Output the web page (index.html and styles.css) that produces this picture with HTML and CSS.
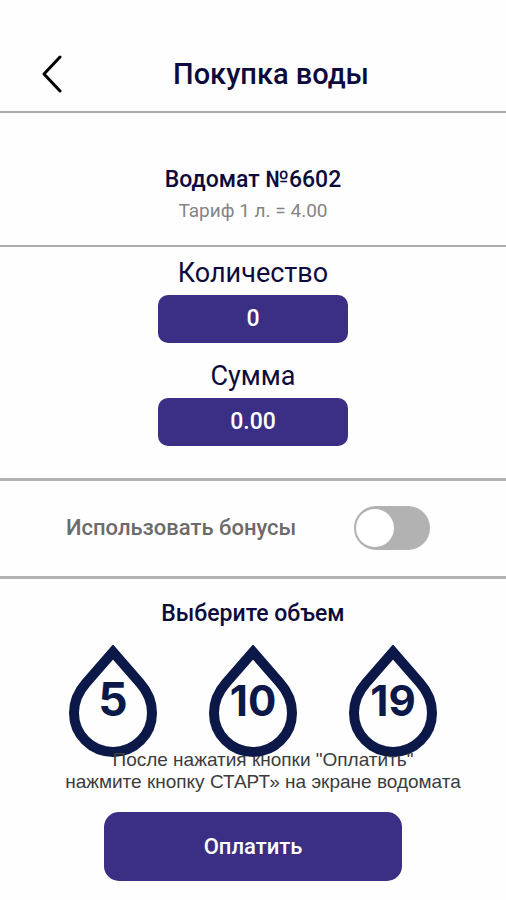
FILE: index.html
```html
<!DOCTYPE html>
<html lang="ru">
<head>
<meta charset="utf-8">
<meta name="viewport" content="width=device-width, initial-scale=1">
<title>Покупка воды</title>
<link rel="stylesheet" href="styles.css">
</head>
<body>
<header class="header">
  <button class="back" type="button" aria-label="Назад">
    <svg width="20" height="38" viewBox="0 0 20 38" fill="none" stroke="#000" stroke-width="3" stroke-linecap="round" stroke-linejoin="round"><path d="M18 2 2 19 18 36"/></svg>
  </button>
  <h1 class="title">Покупка воды</h1>
</header>
<main>
  <section class="machine">
    <h2 class="subtitle">Водомат №6602</h2>
    <p class="tariff">Тариф 1 л. = 4.00</p>
  </section>
  <section class="totals">
    <label class="total-label" for="amount">Количество</label>
    <input class="total-value" id="amount" type="text" value="0" readonly>
    <label class="total-label" for="sum">Сумма</label>
    <input class="total-value" id="sum" type="text" value="0.00" readonly>
  </section>
  <section class="bonus">
    <label class="bonus-label" for="bonus">Использовать бонусы</label>
    <input class="switch" id="bonus" type="checkbox" role="switch">
  </section>
  <section class="volume">
    <h2 class="subtitle">Выберите объем</h2>
    <div class="drops">
      <button class="drop" type="button">
        <svg class="drop-shape" viewBox="0 0 88 114"><path d="M44 7 L17 38 C9 47 5 56 5 68 A39 39 0 0 0 83 68 C83 56 79 47 71 38Z"/></svg>
        <span class="drop-number drop-number-single">5</span>
      </button>
      <button class="drop" type="button">
        <svg class="drop-shape" viewBox="0 0 88 114"><path d="M44 7 L17 38 C9 47 5 56 5 68 A39 39 0 0 0 83 68 C83 56 79 47 71 38Z"/></svg>
        <span class="drop-number">10</span>
      </button>
      <button class="drop" type="button">
        <svg class="drop-shape" viewBox="0 0 88 114"><path d="M44 7 L17 38 C9 47 5 56 5 68 A39 39 0 0 0 83 68 C83 56 79 47 71 38Z"/></svg>
        <span class="drop-number">19</span>
      </button>
    </div>
    <p class="hint">После нажатия кнопки "Оплатить"<br>нажмите кнопку СТАРТ» на экране водомата</p>
    <button class="pay" type="button">Оплатить</button>
  </section>
</main>
</body>
</html>
```
FILE: styles.css
```css
* {
  box-sizing: border-box;
}

body {
  margin: 0;
  background: #fefefe;
  color: #0c0b3c;
  font-family: Roboto, "Liberation Sans", sans-serif;
}

h1, h2, p {
  margin: 0;
}

button {
  padding: 0;
  border: 0;
  background: none;
  color: inherit;
  font: inherit;
  cursor: pointer;
}

.header {
  display: grid;
  grid-template-columns: 40px 1fr 40px;
  align-items: center;
  padding: 48px 32px 11px;
  border-bottom: 2px solid #acacac;
}

.back {
  display: grid;
  place-items: center;
  height: 52px;
}

.title {
  padding-left: 36px;
  font-size: 29px;
  line-height: 36px;
  font-weight: 500;
  text-align: center;
}

.subtitle {
  font-size: 23px;
  line-height: 32px;
  font-weight: 500;
}

.machine {
  padding: 51px 16px 19px;
  border-bottom: 2px solid #acacac;
  text-align: center;
}

.tariff {
  color: #858585;
  font-size: 19px;
  line-height: 30px;
}

.totals {
  display: flex;
  flex-direction: column;
  align-items: center;
  padding: 4px 16px 32px;
  border-bottom: 3px solid #b2b2b2;
}

.total-label {
  font-size: 27px;
  line-height: 44px;
}

.total-value {
  width: 190px;
  height: 48px;
  margin-bottom: 11px;
  padding: 0;
  border: 0;
  border-radius: 10px;
  background: #3a2f85;
  color: #fff;
  font: 500 23px/48px Roboto, sans-serif;
  text-align: center;
}

.total-value:last-child {
  margin-bottom: 0;
}

.bonus {
  display: flex;
  align-items: center;
  justify-content: space-between;
  padding: 25px 76px 26px 66px;
  border-bottom: 3px solid #b2b2b2;
}

.bonus-label {
  color: #6b6b6b;
  font-size: 22px;
  line-height: 32px;
  font-weight: 500;
}

.switch {
  appearance: none;
  width: 76px;
  height: 44px;
  margin: 0;
  padding: 3px 2px;
  border-radius: 22px;
  background: #b2b2b2;
  cursor: pointer;
}

.switch::before {
  content: "";
  display: block;
  width: 38px;
  height: 38px;
  border-radius: 50%;
  background: #fff;
}

.switch:checked::before {
  margin-left: auto;
}

.volume {
  display: flex;
  flex-direction: column;
  align-items: center;
  padding: 19px 16px;
}

.drops {
  display: flex;
  gap: 52px;
  margin-top: 15px;
}

.drop {
  display: grid;
  width: 88px;
  height: 114px;
  color: #0b1848;
}

.drop-shape,
.drop-number {
  grid-area: 1 / 1;
}

.drop-shape {
  width: 88px;
  height: 114px;
  fill: none;
  stroke: currentColor;
  stroke-width: 10;
}

.drop-number {
  padding-top: 28px;
  font-family: Inter, sans-serif;
  font-size: 42px;
  line-height: 56px;
  font-weight: 700;
}

.drop-number-single {
  padding-top: 26px;
  font-size: 46px;
}

.hint {
  z-index: 1;
  margin-top: -10px;
  padding-left: 20px;
  color: #3c3c3c;
  font-family: "Liberation Sans", sans-serif;
  font-size: 19px;
  line-height: 22px;
  text-align: center;
}

.pay {
  width: 298px;
  max-width: 100%;
  height: 69px;
  margin-top: 19px;
  border-radius: 15px;
  background: #3a2f85;
  color: #fff;
  font-size: 22px;
  font-weight: 500;
}
```
